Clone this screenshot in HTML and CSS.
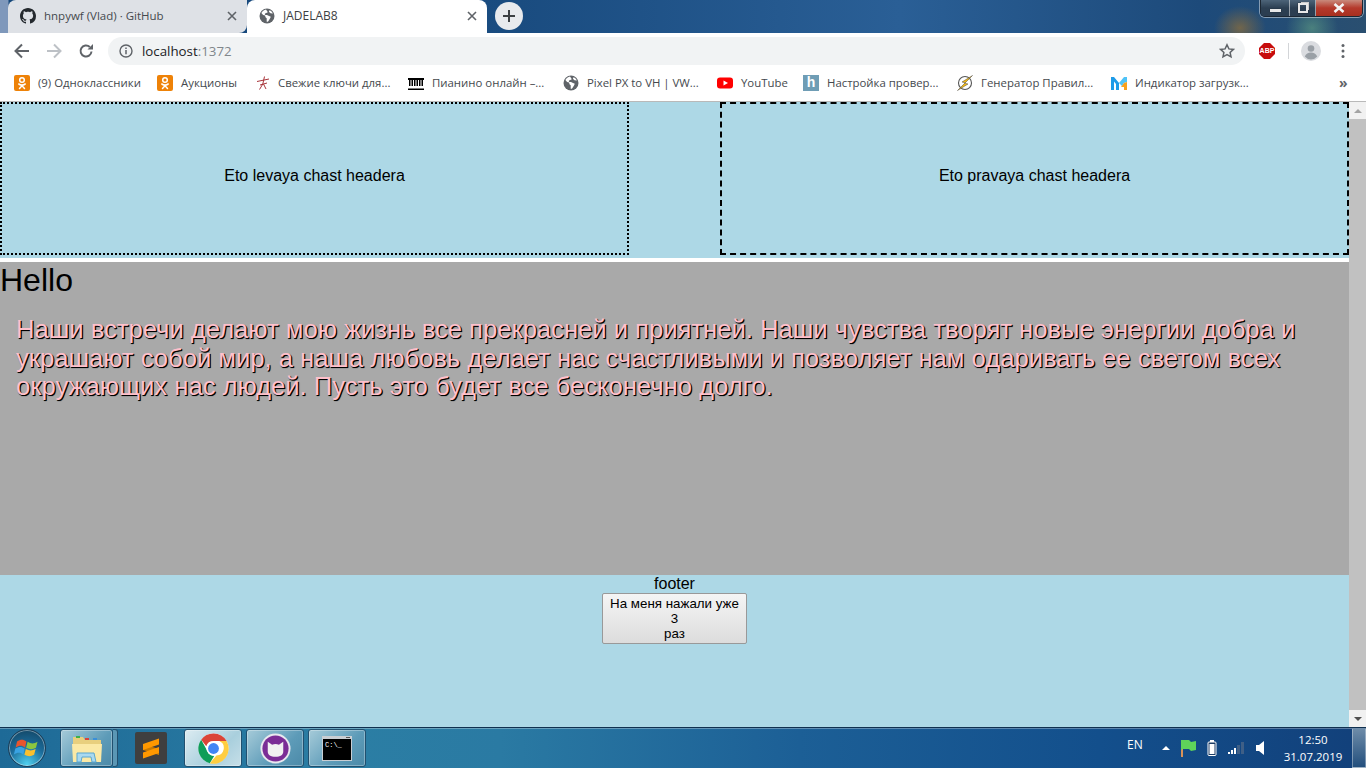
FILE: index.html
```html
<!DOCTYPE html>
<html lang="ru">
<head>
<meta charset="utf-8">
<title>JADELAB8</title>
<link rel="stylesheet" href="styles.css">
</head>
<body>
<div class="browser">
  <div class="titlebar">
    <div class="tab tab-inactive">
      <svg class="tab-icon" viewBox="0 0 16 16"><path fill="#24292e" d="M8 0C3.58 0 0 3.58 0 8c0 3.54 2.29 6.53 5.47 7.59.4.07.55-.17.55-.38 0-.19-.01-.82-.01-1.49-2.01.37-2.53-.49-2.69-.94-.09-.23-.48-.94-.82-1.13-.28-.15-.68-.52-.01-.53.63-.01 1.08.58 1.23.82.72 1.21 1.87.87 2.33.66.07-.52.28-.87.51-1.07-1.78-.2-3.64-.89-3.64-3.95 0-.87.31-1.59.82-2.15-.08-.2-.36-1.02.08-2.12 0 0 .67-.21 2.2.82.64-.18 1.32-.27 2-.27s1.36.09 2 .27c1.53-1.04 2.2-.82 2.2-.82.44 1.1.16 1.92.08 2.12.51.56.82 1.27.82 2.15 0 3.07-1.87 3.75-3.65 3.95.29.25.54.73.54 1.48 0 1.07-.01 1.93-.01 2.2 0 .21.15.46.55.38A8.01 8.01 0 0 0 16 8c0-4.42-3.58-8-8-8z"/></svg>
      <span class="tab-title">hnpywf (Vlad) · GitHub</span>
      <svg class="tab-close" viewBox="0 0 10 10"><path d="M1 1l8 8M9 1l-8 8"/></svg>
    </div>
    <div class="tab tab-active">
      <svg class="tab-icon" viewBox="0 0 16 16"><circle cx="8" cy="8" r="7.5" fill="#5f6368"/><path fill="#fff" d="M7 1.6C5 2 3.3 3.3 2.4 5l1.700 2 2 .6.400 1.600 1.200 1v3.600c.5.1 1 0 1.400-.2l1.900-3 .8-1.900-2.300-.9-1.500-.9-1.700.2-.6-1 1.200-1.200 1.300-.2.5-.8zM10.500 2.300l-.6 1.400 1.600 1.500 2.400.3c-.6-1.500-1.900-2.700-3.400-3.200z"/></svg>
      <span class="tab-title">JADELAB8</span>
      <svg class="tab-close" viewBox="0 0 10 10"><path d="M1 1l8 8M9 1l-8 8"/></svg>
    </div>
    <div class="newtab"><svg viewBox="0 0 12 12"><path d="M6 0v12M0 6h12"/></svg></div>
    <div class="window-controls">
      <div class="wc wc-min"><span class="wc-dash"></span></div>
      <div class="wc wc-max"><span class="wc-square"></span></div>
      <div class="wc wc-close"><svg viewBox="0 0 12 10"><path d="M1.500 1l9 8M10.500 1l-9 8"/></svg></div>
    </div>
  </div>

  <div class="toolbar">
    <svg class="nav-icon" viewBox="0 0 16 16"><path fill="none" stroke="#5f6368" stroke-width="2" d="M15 8H2M8 1.500L1.500 8 8 14.500"/></svg>
    <svg class="nav-icon" viewBox="0 0 16 16"><path fill="none" stroke="#bdc1c6" stroke-width="2" d="M1 8h13M8 1.500L14.500 8 8 14.500"/></svg>
    <svg class="nav-icon" viewBox="0 0 16 16"><path fill="none" stroke="#5f6368" stroke-width="2" d="M13.500 8.500A5.500 5.500 0 1 1 11.800 4"/><path fill="#5f6368" d="M9.500 6.500H15V1z"/></svg>
    <div class="omnibox">
      <svg class="info-icon" viewBox="0 0 14 14"><circle cx="7" cy="7" r="6" fill="none" stroke="#5f6368" stroke-width="1.400"/><path stroke="#5f6368" stroke-width="1.500" d="M7 6v4.200M7 3.500v1.400"/></svg>
      <span class="url">localhost<span class="url-port">:1372</span></span>
      <svg class="star" viewBox="0 0 16 16"><path fill="none" stroke="#5f6368" stroke-width="1.500" d="M8 1.800l1.900 4.100 4.500.5-3.300 3 .9 4.400L8 11.600l-4 2.200.9-4.400-3.300-3 4.500-.5z"/></svg>
    </div>
    <div class="abp"><svg viewBox="0 0 16 16"><path fill="#c70d0d" d="M5 0h6l5 5v6l-5 5H5l-5-5V5z"/></svg><span class="abp-text">ABP</span></div>
    <div class="tool-sep"></div>
    <svg class="avatar" viewBox="0 0 20 20"><circle cx="10" cy="10" r="10" fill="#dadce0"/><circle cx="10" cy="7.500" r="3.300" fill="#9aa0a6"/><path fill="#9aa0a6" d="M3.800 15.500c1-2.700 3.500-4 6.200-4s5.200 1.300 6.200 4a8 8 0 0 1-12.400 0z"/></svg>
    <svg class="menu-dots" viewBox="0 0 4 16"><circle cx="2" cy="2.500" r="1.500"/><circle cx="2" cy="8" r="1.500"/><circle cx="2" cy="13.500" r="1.500"/></svg>
  </div>

  <div class="bookmarks">
    <div class="bm bm-1"><svg class="bm-icon" viewBox="0 0 16 16"><rect width="16" height="16" rx="2" fill="#ee8208"/><circle cx="8" cy="5" r="2.300" fill="none" stroke="#fff" stroke-width="1.500"/><path fill="none" stroke="#fff" stroke-width="1.500" stroke-linecap="round" d="M4.800 9c2 1.300 4.400 1.300 6.400 0M8 10.300v.5M5.500 13.500L8 10.800l2.500 2.700"/></svg><span class="bm-text">(9) Одноклассники</span></div>
    <div class="bm bm-2"><svg class="bm-icon" viewBox="0 0 16 16"><rect width="16" height="16" rx="2" fill="#ee8208"/><circle cx="8" cy="5" r="2.300" fill="none" stroke="#fff" stroke-width="1.500"/><path fill="none" stroke="#fff" stroke-width="1.500" stroke-linecap="round" d="M4.800 9c2 1.300 4.400 1.300 6.400 0M8 10.300v.5M5.500 13.500L8 10.800l2.500 2.700"/></svg><span class="bm-text">Аукционы</span></div>
    <div class="bm bm-3"><svg class="bm-icon bm-icon-narrow" viewBox="0 0 14 16"><path fill="none" stroke="#a8343a" stroke-width="1" d="M1 6.500l12-2.500M4 10l7-2M8.500 1.500L6.800 9 3.500 14.500M7.500 9l2.500 5"/></svg><span class="bm-text">Свежие ключи для...</span></div>
    <div class="bm bm-4"><svg class="bm-icon" viewBox="0 0 16 16"><path d="M0 3h16v2H0zM0 13.500h16V15H0z"/><path d="M1 5h1.500v6H1zM3.500 5H5v6H3.500zM6 5h1.500v6H6zM8.500 5H10v6H8.500zM11 5h1.500v6H11zM13.500 5H15v6h-1.500z"/></svg><span class="bm-text">Пианино онлайн –...</span></div>
    <div class="bm bm-5"><svg class="bm-icon" viewBox="0 0 16 16"><circle cx="8" cy="8" r="7.500" fill="#5f6368"/><path fill="#fff" d="M7 1.600C5 2 3.300 3.300 2.400 5l1.700 2 2 .6.400 1.600 1.200 1v3.600c.5.1 1 0 1.400-.2l1.900-3 .8-1.900-2.300-.9-1.500-.9-1.700.2-.6-1 1.200-1.200 1.300-.2.5-.8zM10.500 2.300l-.6 1.400 1.600 1.500 2.400.3c-.6-1.500-1.900-2.700-3.400-3.200z"/></svg><span class="bm-text">Pixel PX to VH | VW...</span></div>
    <div class="bm bm-6"><svg class="bm-icon" viewBox="0 0 16 16"><rect y="2.500" width="16" height="11" rx="3" fill="#f00"/><path fill="#fff" d="M6.500 5.500v5L11 8z"/></svg><span class="bm-text">YouTube</span></div>
    <div class="bm bm-7"><div class="h-icon">h</div><span class="bm-text">Настройка провер...</span></div>
    <div class="bm bm-8"><svg class="bm-icon" viewBox="0 0 16 16"><circle cx="8" cy="8" r="6.500" fill="#fff" stroke="#555" stroke-width="1.100"/><path fill="#f5b90f" stroke="#444" stroke-width=".5" d="M15.500.5L5 7l3.200.8L.5 15.500 11 9 7.800 8.200z"/></svg><span class="bm-text">Генератор Правил...</span></div>
    <div class="bm bm-9"><svg class="bm-icon" viewBox="0 0 16 16"><path fill="#1e9be8" d="M0 2h3l5 6v7H5V9L3 6.500V15H0z"/><path fill="#4fc3f7" d="M8 8l5-6h3v5l-3 1-2 3z"/><path fill="#f9a11b" d="M13 8l3-1v8h-3v-3h-3z"/></svg><span class="bm-text">Индикатор загрузк...</span></div>
    <div class="bm-more">»</div>
  </div>
</div>

<div class="viewport">
  <main class="page">
    <header class="page-header">
      <div class="head-box head-left">Eto levaya chast headera</div>
      <div class="head-box head-right">Eto pravaya chast headera</div>
    </header>
    <section class="content">
      <h1 class="hello">Hello</h1>
      <p class="message">Наши встречи делают мою жизнь все прекрасней и приятней. Наши чувства творят новые энергии добра и украшают собой мир, а наша любовь делает нас счастливыми и позволяет нам одаривать ее светом всех окружающих нас людей. Пусть это будет все бесконечно долго.</p>
    </section>
    <footer class="page-footer">
      <div>footer</div>
      <button class="counter" type="button"><span class="counter-line">На меня нажали уже</span><span class="counter-line">3</span><span class="counter-line">раз</span></button>
    </footer>
  </main>
  <aside class="scrollbar">
    <div class="sb-arrow sb-up"></div>
    <div class="sb-track"><div class="sb-thumb"></div></div>
    <div class="sb-arrow sb-down"></div>
  </aside>
</div>

<div class="taskbar">
  <div class="start-orb">
    <svg viewBox="0 0 24 24"><path fill="#e8552d" d="M3.500 6.500c2.800-2 5.500-2 8 0l-1.200 5c-2.500-1.800-5-1.800-8 0z"/><path fill="#8cc63f" d="M12.500 6.700c2.700 1.800 5.500 1.800 8.500 0l-1.300 5c-2.700 1.700-5.500 1.700-8.400 0z"/><path fill="#3aa3e3" d="M2 12.500c3-1.800 5.500-1.800 8 0l-1.200 5c-2.500-1.800-5-1.800-8 0z"/><path fill="#fbc02d" d="M11 12.800c2.700 1.700 5.400 1.700 8.400 0l-1.300 5c-2.700 1.700-5.500 1.700-8.300 0z"/></svg>
  </div>
  <div class="task task-explorer">
    <svg class="task-icon-folder" viewBox="0 0 32 30"><path fill="#e8cf7e" d="M2 4h10l2 3h16v22H2z"/><path fill="#fbe9a6" d="M1 11h30l-1 18H2z"/><rect x="5" y="3" width="4" height="2" fill="#3fb04a"/><rect x="14" y="5" width="4" height="2" fill="#d9443a"/><rect x="22" y="5" width="4" height="2" fill="#3a8fd9"/><path fill="#a9d9f0" stroke="#5ba7d0" d="M6 20h17l2 9h-4l-1-5H11l-1 5H6z"/></svg>
  </div>
  <div class="task-edge"></div>
  <div class="task task-plain">
    <svg class="task-icon-sublime" viewBox="0 0 32 32"><rect width="32" height="32" rx="2" fill="#3f3f3f"/><path fill="#c97a00" d="M8 12l16 5v6L8 18z"/><path fill="#ff9800" d="M8 12l16-5.500v6L8 18zM8 20.500l16-5.500v6l-16 5.500z"/></svg>
  </div>
  <div class="task task-active">
    <svg class="task-icon-round" viewBox="0 0 32 32"><circle cx="16" cy="16" r="15.500" fill="#fff"/><path fill="#db4437" d="M16 .5A15.500 15.500 0 0 1 29.500 8.300H16a7.800 7.800 0 0 0-7.500 5.500L3.300 7A15.500 15.500 0 0 1 16 .5z"/><path fill="#0f9d58" d="M3.300 7l6.900 12.500a7.800 7.800 0 0 0 6.500 4.200l-4.500 7.500A15.500 15.500 0 0 1 3.300 7z"/><path fill="#ffcd40" d="M29.500 8.300A15.500 15.500 0 0 1 12.200 31.200l6.800-8a7.800 7.800 0 0 0 3-14.900z"/><circle cx="16" cy="16" r="7.300" fill="#fff"/><circle cx="16" cy="16" r="5.600" fill="#4285f4"/></svg>
  </div>
  <div class="task task-on">
    <svg class="task-icon-round" viewBox="0 0 32 32"><circle cx="16" cy="16" r="15.500" fill="#e9e9ef"/><circle cx="16" cy="16" r="13.500" fill="#7b2d96"/><path fill="#f1f1f1" d="M8 9l4.500 3a11 11 0 0 1 7 0L24 9v10c0 3.500-3 5.500-8 5.500S8 22.500 8 19z"/></svg>
  </div>
  <div class="task task-on">
    <svg class="task-icon-cmd" viewBox="0 0 30 25"><rect width="30" height="25" fill="#c9ced3"/><rect x="1" y="3" width="28" height="21" fill="#000"/><rect x="24" y="1" width="4" height="1" fill="#555"/><text x="3" y="11" class="cmd-text">C:\_</text></svg>
  </div>
  <div class="tray">
    <span class="tray-lang">EN</span>
    <span class="tray-arrow"></span>
    <svg class="tray-flag" viewBox="0 0 16 18"><rect x="1" y="3" width="2" height="15" fill="#d9925a"/><path fill="#5fd35a" d="M1 1h8l2 2 5-1v9l-5 1-2-2H3L1 11z"/></svg>
    <svg class="tray-batt" viewBox="0 0 10 16"><rect x="3" y="0" width="4" height="2" fill="#fff"/><rect x="1" y="2" width="8" height="13.500" rx="1" fill="#1c3d66" stroke="#fff"/><rect x="2.500" y="4" width="5" height="10" fill="#fff"/></svg>
    <svg class="tray-signal" viewBox="0 0 16 12"><path fill="#fff" d="M0 10h2v2H0zM3 8h2v4H3z"/><path fill="#fff" d="M6 6h2v6H6z"/><path fill="#3f5f86" d="M9 3h3v9H9zM13 0h3v12h-3z"/></svg>
    <svg class="tray-speaker" viewBox="0 0 8 14"><path fill="#fff" d="M0 4h3l5-4v14l-5-4H0z"/></svg>
    <div class="clock"><div>12:50</div><div>31.07.2019</div></div>
    <div class="show-desktop"></div>
  </div>
</div>
</body>
</html>
```

FILE: styles.css
```css
* { box-sizing: border-box; }

html, body {
  margin: 0;
  height: 768px;
  overflow: hidden;
}

body {
  display: flex;
  flex-direction: column;
  font-family: "Liberation Sans", Arial, sans-serif;
  color: #000;
  background: #fff;
}

/* Browser chrome */
.browser {
  flex: 0 0 102px;
  display: flex;
  flex-direction: column;
  font-family: "Open Sans", "Noto Sans", sans-serif;
  font-size: 12px;
  border-bottom: 1px solid #b9b9b9;
}

.titlebar {
  flex: 0 0 33px;
  display: flex;
  align-items: flex-start;
  padding-left: 8px;
  position: relative;
  background:
    radial-gradient(ellipse 26px 22px at 1240px 28px, rgba(140,110,60,.75), transparent),
    radial-gradient(ellipse 26px 24px at 1312px 28px, rgba(90,150,130,.7), transparent),
    linear-gradient(90deg, #7f98bb 0, #7f98bb 8px, #15477a 9px, #1a4c80 520px, #2a5f96 900px, #1d4a7a 1200px, #2a4f70 1366px);
}

.tab {
  width: 240px;
  height: 33px;
  display: flex;
  align-items: center;
  padding: 0 10px 2px 12px;
  border-radius: 8px 8px 0 0;
  color: #45494e;
}

.tab-inactive { width: 239px; background: #dee1e6; border-radius: 8px 0 8px 0; }
.tab-inactive .tab-title { font-size: 11.5px; }
.tab-active { background: #fff; color: #3c4043; }

.tab-icon { width: 16px; height: 16px; flex: none; }
.tab-title { flex: 1; margin-left: 8px; white-space: nowrap; }
.tab-close { width: 10px; height: 10px; flex: none; margin-right: 0; }
.tab-close path { stroke: #5f6368; stroke-width: 1.6; fill: none; }

.newtab {
  width: 28px;
  height: 28px;
  margin: 2px 0 0 8px;
  border-radius: 50%;
  background: #e8eaed;
  display: flex;
  align-items: center;
  justify-content: center;
}

.newtab svg { width: 12px; height: 12px; }
.newtab path { stroke: #3c4043; stroke-width: 2; fill: none; }

.window-controls {
  position: absolute;
  top: 0;
  right: 3px;
  width: 103px;
  height: 17px;
  display: flex;
  border: 1px solid #1c2733;
  border-top: 0;
  border-radius: 0 0 5px 5px;
  box-shadow: 0 0 0 1px rgba(255,255,255,.45);
  overflow: hidden;
}

.wc {
  display: flex;
  align-items: center;
  justify-content: center;
  border-right: 1px solid rgba(255,255,255,.5);
  background: linear-gradient(#4d6479, #2c3f52 50%, #2b3d50);
}

.wc-min { width: 29px; }
.wc-max { width: 26px; }
.wc-close {
  flex: 1;
  border-right: 0;
  background: linear-gradient(#c98a7c, #b5392b 50%, #a8301f);
}

.wc-dash { width: 11px; height: 3px; margin-top: 5px; background: #e8e8e8; box-shadow: 0 0 1px #111; }
.wc-square { width: 10px; height: 10px; border: 2px solid #e8e8e8; box-shadow: 2px -2px 0 -1px #ccc, 0 0 1px #111; }
.wc-close svg { width: 12px; height: 10px; }
.wc-close path { stroke: #f3f3f3; stroke-width: 2.6; fill: none; }

.toolbar {
  flex: 0 0 34px;
  display: flex;
  align-items: center;
  background: #fff;
  padding: 2px 14px 0 14px;
}

.nav-icon { width: 16px; height: 16px; flex: none; margin-right: 16px; }

.omnibox {
  flex: none;
  width: 1137px;
  height: 28px;
  margin-left: -2px;
  margin-right: 14px;
  border-radius: 14px;
  background: #f1f3f4;
  display: flex;
  align-items: center;
  padding: 0 10px 0 11px;
}

.info-icon { width: 14px; height: 14px; flex: none; }
.url { flex: 1; margin-left: 9px; font-size: 13.3px; color: #202124; }
.url-port { color: #80868b; }
.star { width: 16px; height: 16px; flex: none; }

.abp {
  position: relative;
  flex: none;
  width: 16px;
  height: 16px;
}

.abp svg { display: block; width: 16px; height: 16px; }

.abp-text {
  position: absolute;
  inset: 0;
  text-align: center;
  color: #fff;
  font: bold 7px/16px "Liberation Sans", sans-serif;
}

.tool-sep { flex: none; width: 1px; height: 16px; margin: 0 13px; background: #d3d5d8; }
.avatar { width: 20px; height: 20px; flex: none; margin-left: -1px; }
.menu-dots { width: 4px; height: 16px; flex: none; margin-left: 20px; fill: #5f6368; }

.bookmarks {
  flex: 0 0 34px;
  display: flex;
  align-items: center;
  background: #fff;
  padding: 0 0 3px 14px;
  color: #45494e;
  position: relative;
}

.bm {
  flex: none;
  display: flex;
  align-items: center;
  gap: 8px;
  white-space: nowrap;
}

.bm-1 { width: 143px; }
.bm-2 { width: 99px; }
.bm-3 { width: 152px; }
.bm-4 { width: 155px; }
.bm-5 { width: 154px; }
.bm-6 { width: 86px; }
.bm-7 { width: 154px; }
.bm-8 { width: 154px; }
.bm-9 { width: 200px; }

.bm-icon { width: 16px; height: 16px; flex: none; }
.bm-icon-narrow { width: 14px; }
.bm-text { font-size: 11.4px; }

.h-icon {
  width: 16px;
  height: 16px;
  flex: none;
  background: #6f9db5;
  color: #fff;
  font: bold 14px/15px "Liberation Sans", sans-serif;
  text-align: center;
}

.bm-more {
  margin-left: 28px;
  font-size: 14px;
  font-weight: 700;
  line-height: 16px;
  color: #5f6368;
}

/* Page */
.viewport {
  flex: 0 0 625px;
  display: flex;
  min-height: 0;
}

.page {
  flex: 0 0 1349px;
  display: flex;
  flex-direction: column;
  background: #fff;
}

.page-header {
  flex: 0 0 156px;
  display: flex;
  justify-content: space-between;
  align-items: flex-start;
  background: #add8e6;
}

.head-box {
  width: 629px;
  height: 153px;
  padding-top: 63px;
  font-size: 16px;
  line-height: 18px;
  text-align: center;
}

.head-left { border: 2px dotted #000; }
.head-right { border: 2px dashed #000; }

.content {
  flex: 0 0 313px;
  margin-top: 4px;
  background: #a9a9a9;
  overflow: hidden;
}

.hello {
  margin: 0;
  font-size: 32px;
  font-weight: 400;
  line-height: 37px;
}

.message {
  margin: 16px 16px 0;
  font-size: 25.6px;
  line-height: 28.6px;
  color: #ffc0cb;
  text-shadow: 1px 1px 0 #000, 1px 1px 1px #000;
}

.page-footer {
  flex: 1;
  display: flex;
  flex-direction: column;
  align-items: center;
  background: #add8e6;
  font-size: 16px;
  line-height: 18px;
}

.counter {
  width: 145px;
  height: 51px;
  padding: 1px 6px;
  border: 1px solid #999;
  border-radius: 2px;
  background: linear-gradient(#f5f5f5, #dcdcdc);
  font-family: "Liberation Sans", Arial, sans-serif;
  font-size: 13.333px;
  line-height: 15px;
  color: #000;
}

.counter-line { display: block; }

/* Scrollbar */
.scrollbar {
  flex: 0 0 17px;
  display: flex;
  flex-direction: column;
  background: #f1f1f1;
}

.sb-arrow { flex: 0 0 17px; display: flex; align-items: center; justify-content: center; }
.sb-up::before, .sb-down::before {
  content: "";
  border-left: 4px solid transparent;
  border-right: 4px solid transparent;
}
.sb-up::before { border-bottom: 4px solid #a3a3a3; }
.sb-down::before { border-top: 4px solid #505050; }
.sb-track { flex: 1; }
.sb-thumb { height: 100%; background: #c1c1c1; }

/* Taskbar */
.taskbar {
  flex: 1;
  display: flex;
  align-items: center;
  border-top: 1px solid #10304f;
  box-shadow: inset 0 1px 0 rgba(255,255,255,.3);
  background: linear-gradient(90deg, #1e6a97 0, #2b7ea4 350px, #2a7aa3 500px, #1c5f96 800px, #134f8c 1100px, #12407a 1366px);
  position: relative;
}

.start-orb {
  flex: none;
  width: 38px;
  height: 38px;
  margin: 0 14px 0 8px;
  border-radius: 50%;
  border: 1px solid #1d3e57;
  background: radial-gradient(circle at 50% 95%, #4fd0ef, #1b6b9a 50%, #12405c);
  display: flex;
  align-items: center;
  justify-content: center;
  box-shadow: inset 0 0 0 1px rgba(255,255,255,.4);
}

.start-orb svg { width: 28px; height: 28px; }

.task {
  flex: none;
  width: 58px;
  height: 38px;
  margin-right: 4px;
  display: flex;
  align-items: center;
  justify-content: center;
  border-radius: 3px;
  border: 1px solid #21506f;
  box-shadow: inset 0 0 0 1px rgba(255,255,255,.3);
  background: linear-gradient(135deg, #a6cbd9, #5d9bb8 60%, #4c8aa8);
}

.task-explorer { width: 53px; margin-right: 0; }
.task-edge {
  flex: none;
  width: 5px;
  height: 38px;
  margin-right: 17px;
  border: 1px solid #21506f;
  border-left: 0;
  border-radius: 0 3px 3px 0;
  background: #5a97b5;
}
.task-plain {
  width: 32px;
  margin-right: 17px;
  border: 0;
  background: none;
  box-shadow: none;
}
.task-active { background: linear-gradient(135deg, #dcecf2, #a9cfdd 60%, #c6dfe8); }

.task-icon-folder { width: 32px; height: 30px; }
.task-icon-sublime { width: 32px; height: 32px; flex: none; }
.task-icon-round { width: 31px; height: 31px; }
.task-icon-cmd { width: 30px; height: 25px; }
.cmd-text { font: 7px "Liberation Mono", monospace; fill: #fff; }

.tray {
  flex: 1;
  display: flex;
  align-items: center;
  height: 100%;
  color: #fff;
  font-family: "Open Sans", "Noto Sans", sans-serif;
  font-size: 12px;
}

.tray-lang { margin: -8px 0 0 757px; width: 16px; }
.tray-arrow {
  margin-left: 19px;
  border-left: 4px solid transparent;
  border-right: 4px solid transparent;
  border-bottom: 4px solid #fff;
}
.tray-flag { width: 16px; height: 18px; margin-left: 10px; }
.tray-batt { width: 10px; height: 16px; margin-left: 11px; }
.tray-signal { width: 16px; height: 12px; margin-left: 11px; }
.tray-speaker { width: 8px; height: 14px; margin-left: 12px; }

.clock {
  margin-left: 19px;
  width: 60px;
  text-align: center;
  font-size: 11.5px;
  line-height: 17px;
  white-space: nowrap;
}

.show-desktop {
  margin-left: auto;
  width: 14px;
  height: 100%;
  border: 1px solid rgba(255,255,255,.35);
  background: linear-gradient(#6d8ba8, #234f7d);
}
```
